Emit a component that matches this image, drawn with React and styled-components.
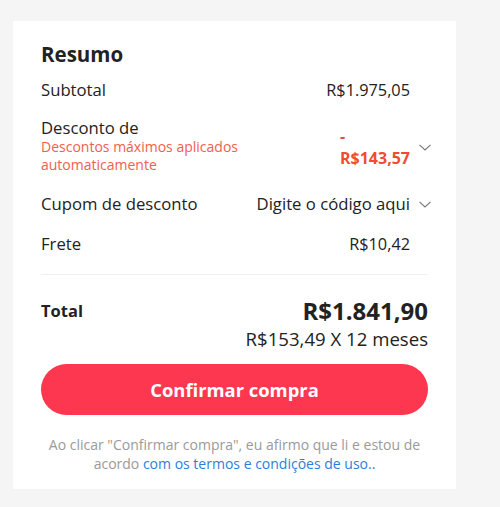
import React from "react";
import styled, { createGlobalStyle } from "styled-components";

const Global = createGlobalStyle`
  html, body { margin: 0; padding: 0; background: #f5f5f5; }
  body { font-family: "Open Sans", "Noto Sans", sans-serif; color: #222; }
`;

const Page = styled.div`
  padding: 21px 44px 18px 13px;
`;

const Card = styled.section`
  background: #fff;
  width: 443px;
  box-sizing: border-box;
  padding: 19px 28px 16px;
  display: flex;
  flex-direction: column;
`;

const Title = styled.h2`
  margin: 0 0 10px;
  font-size: 20.5px;
  line-height: 28px;
  font-weight: 700;
  color: #222;
`;

const Rows = styled.div`
  display: flex;
  flex-direction: column;
  gap: 16px;
`;

const Row = styled.div`
  display: flex;
  align-items: center;
  justify-content: space-between;
`;

const LabelBlock = styled.div`
  display: flex;
  flex-direction: column;
  padding-bottom: ${(p) => (p.$extra ? "2px" : "0")};
`;

const Label = styled.span`
  font-size: 16.7px;
  line-height: ${(p) => (p.$tight ? "20px" : "24px")};
  color: #222;
`;

const Note = styled.span`
  font-size: 14px;
  line-height: 18px;
  color: #f2604b;
  max-width: 230px;
`;

const Right = styled.div`
  display: flex;
  align-items: center;
`;

const Value = styled.span`
  font-size: ${(p) => (p.$bold ? "16px" : p.$num ? "16.3px" : "16.7px")};
  line-height: ${(p) => (p.$bold ? "22px" : "24px")};
  font-weight: ${(p) => (p.$bold ? 700 : 400)};
  color: ${(p) => (p.$red ? "#f04c30" : "#222")};
  text-align: left;
  display: flex;
  flex-direction: column;
`;

const ChevronSlot = styled.span`
  width: 21px;
  margin-right: -3px;
  display: flex;
  justify-content: flex-end;
  align-items: center;
  color: #777;
`;

const Divider = styled.hr`
  border: 0;
  border-top: 1px solid #f0f0f0;
  margin: 18px 0 20px;
`;

const TotalRow = styled.div`
  display: flex;
  justify-content: space-between;
  align-items: flex-start;
`;

const TotalLabel = styled.span`
  font-size: 16.5px;
  line-height: 32px;
  font-weight: 700;
  color: #222;
`;

const TotalValues = styled.div`
  display: flex;
  flex-direction: column;
  align-items: flex-end;
`;

const TotalValue = styled.span`
  font-size: 24px;
  line-height: 32px;
  font-weight: 700;
  color: #222;
`;

const Installment = styled.span`
  font-size: 18.6px;
  line-height: 24px;
  color: #222;
`;

const ConfirmButton = styled.button`
  margin-top: 13px;
  height: 51px;
  border: 0;
  border-radius: 26px;
  background: #fe3750;
  color: #fff;
  font-family: "Open Sans", "Noto Sans", sans-serif;
  font-size: 18.4px;
  font-weight: 700;
  cursor: pointer;
`;

const Terms = styled.p`
  margin: 20px 0 0;
  text-align: center;
  font-size: 14px;
  line-height: 19px;
  color: #9a9a9a;
`;

const Link = styled.a`
  color: #2d7ed8;
  text-decoration: none;
`;

const Chevron = () => (
  <svg width="12" height="7" viewBox="0 0 12 7" fill="none">
    <path d="M0.5 0.8 L6 6 L11.5 0.8" stroke="currentColor" strokeWidth="1.1" />
  </svg>
);

export default function App() {
  return (
    <Page>
      <Global />
      <Card>
        <Title>Resumo</Title>
        <Rows>
          <Row>
            <Label>Subtotal</Label>
            <Right>
              <Value $num>R$1.975,05</Value>
              <ChevronSlot />
            </Right>
          </Row>
          <Row>
            <LabelBlock $extra>
              <Label $tight>Desconto de</Label>
              <Note>Descontos máximos aplicados automaticamente</Note>
            </LabelBlock>
            <Right>
              <Value $bold $red>
                <span>-</span>
                <span>R$143,57</span>
              </Value>
              <ChevronSlot>
                <Chevron />
              </ChevronSlot>
            </Right>
          </Row>
          <Row>
            <Label>Cupom de desconto</Label>
            <Right>
              <Value>Digite o código aqui</Value>
              <ChevronSlot>
                <Chevron />
              </ChevronSlot>
            </Right>
          </Row>
          <Row>
            <Label>Frete</Label>
            <Right>
              <Value $num>R$10,42</Value>
              <ChevronSlot />
            </Right>
          </Row>
        </Rows>
        <Divider />
        <TotalRow>
          <TotalLabel>Total</TotalLabel>
          <TotalValues>
            <TotalValue>R$1.841,90</TotalValue>
            <Installment>R$153,49 X 12 meses</Installment>
          </TotalValues>
        </TotalRow>
        <ConfirmButton>Confirmar compra</ConfirmButton>
        <Terms>
          Ao clicar "Confirmar compra", eu afirmo que li e estou de acordo{" "}
          <Link href="#">com os termos e condições de uso..</Link>
        </Terms>
      </Card>
    </Page>
  );
}
